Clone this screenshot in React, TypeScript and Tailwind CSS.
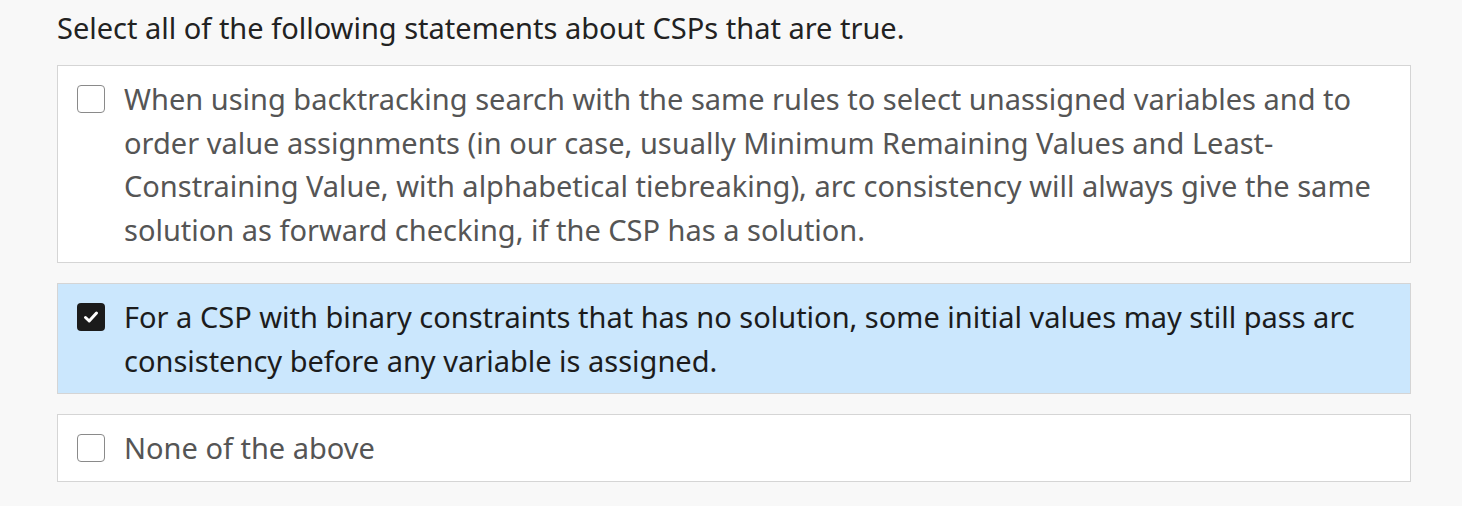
import React from "react";

const options = [
  {
    text: "When using backtracking search with the same rules to select unassigned variables and to order value assignments (in our case, usually Minimum Remaining Values and Least-Constraining Value, with alphabetical tiebreaking), arc consistency will always give the same solution as forward checking, if the CSP has a solution.",
    checked: false,
  },
  {
    text: "For a CSP with binary constraints that has no solution, some initial values may still pass arc consistency before any variable is assigned.",
    checked: true,
  },
  { text: "None of the above", checked: false },
];

export default function App() {
  return (
    <div
      className="w-[1462px] h-[506px] bg-[#f8f8f8] overflow-hidden"
      style={{ fontFamily: '"Noto Sans", "Open Sans", sans-serif' }}
    >
      <div className="pl-[57px] pr-[51px] pt-[8px]">
        <p className="text-[29px] leading-[40px] text-[#222222]">
          Select all of the following statements about CSPs that are true.
        </p>
        <div className="mt-[17px] flex flex-col gap-[20px]">
          {options.map((o, i) => (
            <div
              key={i}
              className={`flex items-start border border-[#d5d5d5] pl-[19px] pr-[19px] py-[11px] ${
                o.checked ? "bg-[#cbe7fd] text-[#1c1c1c]" : "bg-white text-[#555555]"
              }`}
            >
              <div className="h-[43.5px] flex items-center shrink-0">
                {o.checked ? (
                  <div className="w-[28px] h-[28px] rounded-[4px] bg-[#1b1b1b] flex items-center justify-center">
                    <svg width="18" height="18" viewBox="0 0 18 18">
                      <path d="M3.5 9.5 L7.2 13 L14.5 5" stroke="white" strokeWidth="3" fill="none" strokeLinecap="round" strokeLinejoin="round" />
                    </svg>
                  </div>
                ) : (
                  <div className="w-[28px] h-[28px] rounded-[4px] border-[1.5px] border-[#8a8a8a] bg-white" />
                )}
              </div>
              <p className="ml-[19px] text-[29px] leading-[43.5px]">{o.text}</p>
            </div>
          ))}
        </div>
      </div>
    </div>
  );
}
